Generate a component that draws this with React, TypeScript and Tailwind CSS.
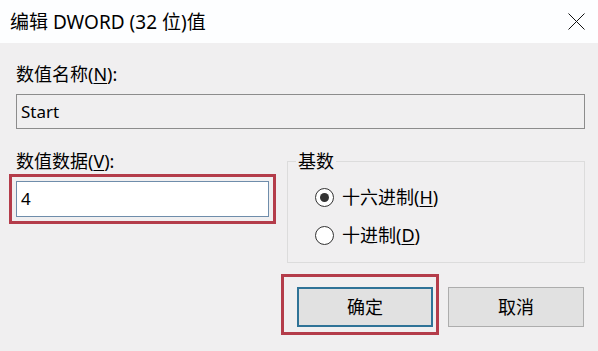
import React from 'react';

const font = "font-['Noto_Sans','Noto_Sans_CJK_SC',sans-serif]";

function Radio({ checked, label, mnemonic }: { checked?: boolean; label: string; mnemonic: string }) {
    return (
        <div className="h-[38px] flex items-center">
            <span className="w-[19px] h-[19px] rounded-full border border-[#333] bg-white flex items-center justify-center">
                {checked && <span className="w-[9px] h-[9px] rounded-full bg-[#333]" />}
            </span>
            <span className="ml-[8px] text-[18px] leading-[24px]">
                {label}(<u className="underline-offset-2">{mnemonic}</u>)
            </span>
        </div>
    );
}

export default function App() {
    return (
        <div className={`w-[598px] h-[351px] bg-[#f0eff0] text-black overflow-hidden flex flex-col ${font}`}>
            {/* title bar */}
            <div className="h-[43px] shrink-0 bg-[#fdfeff] flex items-center pl-[10px] pr-[13px]">
                <span className="text-[19px] leading-[24px]">编辑 DWORD (32 位)值</span>
                <svg className="ml-auto" width="17" height="17" viewBox="0 0 17 17">
                    <path d="M0.5 0.5 L16.5 16.5 M16.5 0.5 L0.5 16.5" stroke="#111" strokeWidth="1" fill="none" />
                </svg>
            </div>

            {/* value name */}
            <div className="pl-[16px] pr-[13px] pt-[18px]">
                <div className="h-[26px] leading-[26px] text-[18px]">
                    数值名称(<u className="underline-offset-2">N</u>):
                </div>
                <div className="mt-[7px] h-[35px] border border-[#8c8c8c] flex items-center pl-[4px] text-[17px]">
                    Start
                </div>
            </div>

            <div className="flex">
                {/* value data */}
                <div className="ml-[9px] w-[267px] pt-[20px]">
                    <div className="h-[25px] leading-[25px] text-[18px] pl-[7px]">
                        数值数据(<u className="underline-offset-2">V</u>):
                    </div>
                    <div className="border-[3px] border-[#b43c4a] p-[4px]">
                        <div className="h-[36px] bg-white border border-[#6f8dab] flex items-center pl-[4px] text-[17px]">
                            4
                        </div>
                    </div>
                </div>

                {/* base + buttons */}
                <div className="ml-[5px] pt-[32px] flex flex-col">
                    <div className="relative ml-[6px] w-[298px] h-[102px] border border-[#dcdcdc] pt-[16px] pl-[27px]">
                        <span className="absolute left-[8px] top-[-13px] px-[2px] bg-[#f0eff0] text-[18px] leading-[24px]">
                            基数
                        </span>
                        <Radio checked label="十六进制" mnemonic="H" />
                        <Radio label="十进制" mnemonic="D" />
                    </div>
                    <div className="mt-[11px] flex items-start">
                        <div className="border-[3px] border-[#b43c4a] pl-[13px] pr-[3px] pt-[10px] pb-[5px]">
                            <div className="w-[136px] h-[40px] border-2 border-[#2f7397] bg-[#e1e1e1] flex items-center justify-center text-[18px]">
                                确定
                            </div>
                        </div>
                        <div className="ml-[9px] mt-[13px] w-[136px] h-[40px] border border-[#adadad] bg-[#e1e1e1] flex items-center justify-center text-[18px]">
                            取消
                        </div>
                    </div>
                </div>
            </div>
        </div>
    );
}
